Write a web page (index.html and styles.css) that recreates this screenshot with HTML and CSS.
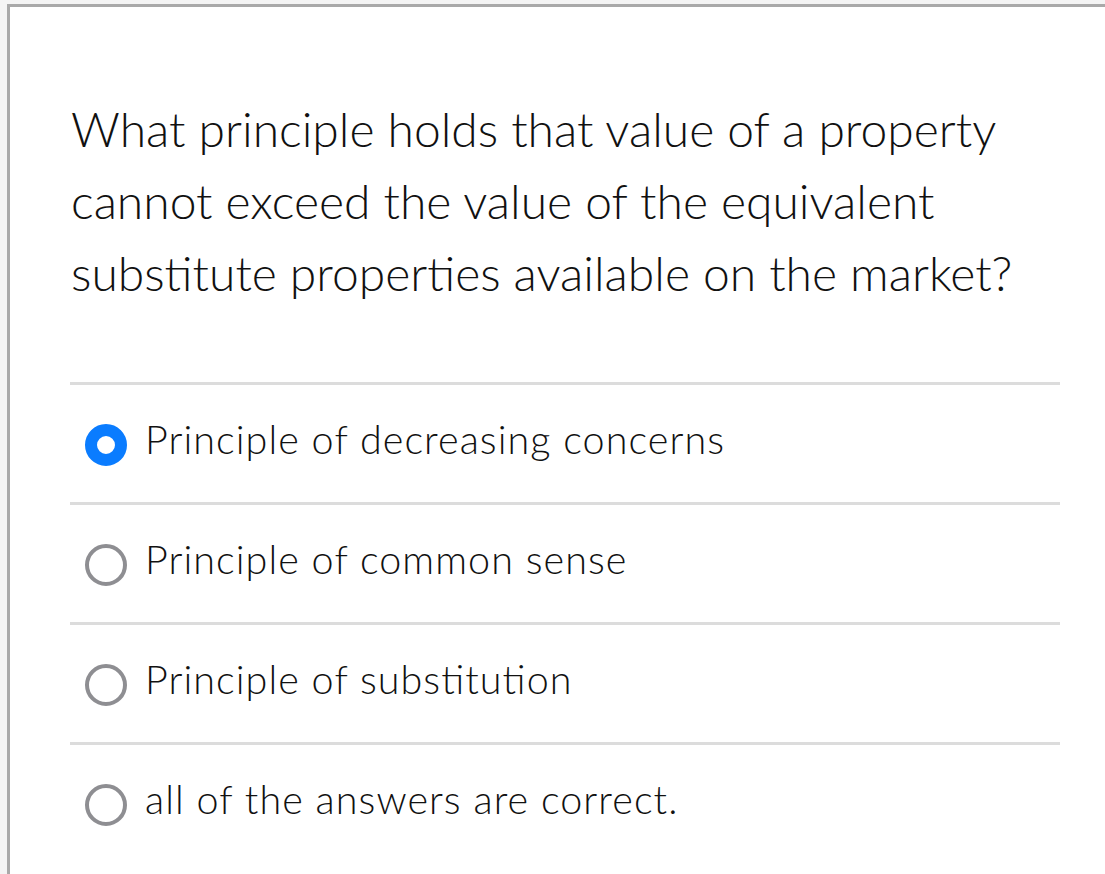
FILE: index.html
```html
<!DOCTYPE html>
<html lang="en">
<head>
<meta charset="utf-8">
<title>Question</title>
<link rel="stylesheet" href="styles.css">
</head>
<body>
<div class="card">
  <p class="question">What principle holds that value of a property cannot exceed the value of the equivalent substitute properties available on the market?</p>
  <ul class="options">
    <li class="option"><span class="radio radio-on"></span><span class="label">Principle of decreasing concerns</span></li>
    <li class="option"><span class="radio"></span><span class="label">Principle of common sense</span></li>
    <li class="option"><span class="radio"></span><span class="label">Principle of substitution</span></li>
    <li class="option"><span class="radio"></span><span class="label">all of the answers are correct.</span></li>
  </ul>
</div>
</body>
</html>
```

FILE: styles.css
```css
html, body {
  margin: 0;
  padding: 0;
  background: #f4f4f4;
  height: 100%;
  overflow: hidden;
}
body {
  font-family: "Lato", "Liberation Sans", sans-serif;
  font-weight: 300;
  color: #111;
  padding: 4px 0 0 7px;
  box-sizing: border-box;
}
.card {
  background: #fff;
  border-top: 3px solid #a9a9a9;
  border-left: 3px solid #a9a9a9;
  padding: 86px 45px 0 60px;
  min-height: 900px;
}
.question {
  margin: 0;
  font-size: 48px;
  line-height: 72px;
  padding-left: 1px;
}
.options {
  list-style: none;
  margin: 73px 0 0;
  padding: 0;
}
.option {
  display: flex;
  align-items: flex-start;
  border-top: 3px solid #dcdcdc;
  height: 120px;
  box-sizing: border-box;
  padding: 30px 0 0 15px;
}
.radio {
  width: 42px;
  height: 42px;
  box-sizing: border-box;
  border-radius: 50%;
  border: 4px solid #8e8e92;
  margin-top: 9px;
  flex: none;
}
.radio-on {
  border: 12px solid #0a7cff;
}
.label {
  font-size: 39.5px;
  line-height: 48px;
  letter-spacing: 1.05px;
  font-variant-ligatures: common-ligatures contextual;
  font-feature-settings: "liga" 1, "calt" 1;
  margin-left: 18px;
}
```
